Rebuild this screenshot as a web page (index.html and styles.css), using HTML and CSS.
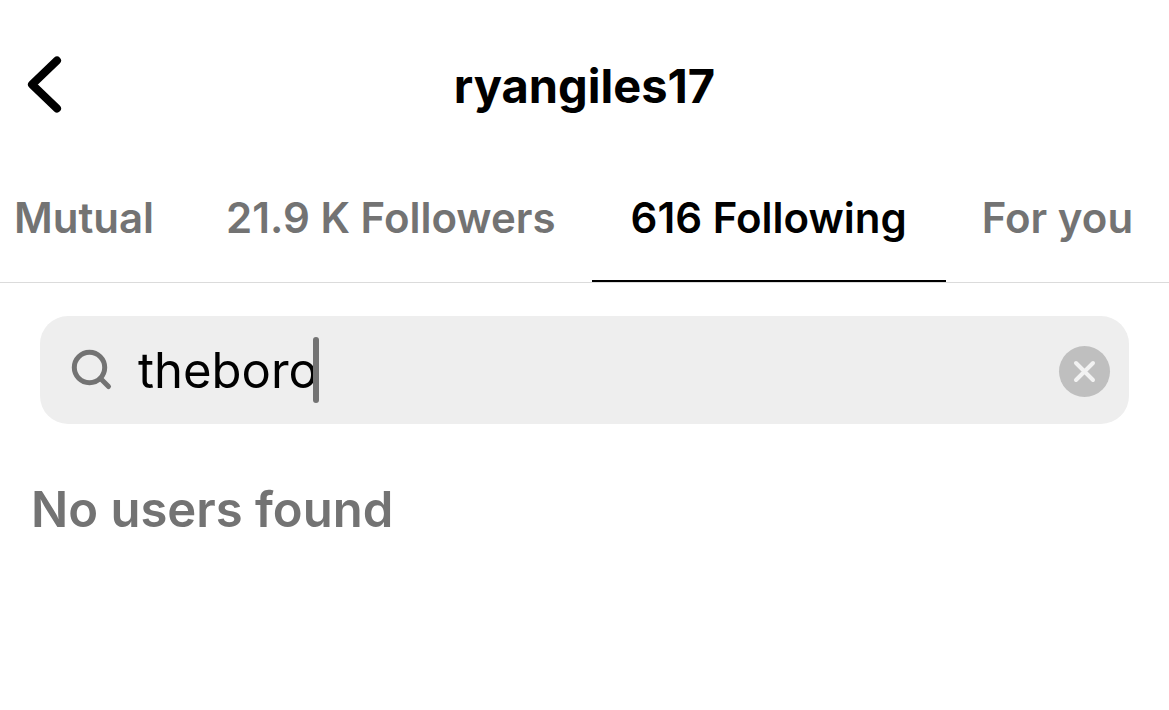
FILE: index.html
```html
<!DOCTYPE html>
<html lang="en">
<head>
<meta charset="utf-8">
<meta name="viewport" content="width=device-width, initial-scale=1">
<title>ryangiles17</title>
<link rel="stylesheet" href="styles.css">
</head>
<body>
<header class="header">
  <button class="back" type="button" aria-label="Back">
    <svg class="back-icon" viewBox="0 0 40 60" aria-hidden="true"><path d="M33 6.500L8 30.500L33 54.500"/></svg>
  </button>
  <h1 class="username">ryangiles17</h1>
</header>
<nav class="tabs" aria-label="Connections">
  <a class="tab" href="#mutual">Mutual</a>
  <a class="tab" href="#followers">21.9 K Followers</a>
  <a class="tab tab-active" href="#following" aria-current="page">616 Following</a>
  <a class="tab" href="#for-you">For you</a>
</nav>
<main class="content">
  <form class="search" role="search">
    <svg class="search-icon" viewBox="0 0 44 44" aria-hidden="true"><circle cx="18.500" cy="18.500" r="15.200"/><path d="M29.500 29.500L37.500 37.500"/></svg>
    <div class="field">
      <input class="query" type="text" value="theboro" aria-label="Search">
      <span class="caret"></span>
    </div>
    <button class="clear" type="button" aria-label="Clear search">
      <svg class="clear-icon" viewBox="0 0 51 51" aria-hidden="true"><path d="M17 17L34 34M34 17L17 34"/></svg>
    </button>
  </form>
  <p class="empty">No users found</p>
</main>
</body>
</html>
```
FILE: styles.css
```css
* {
  box-sizing: border-box;
}

body {
  margin: 0;
  background: #fff;
  color: #000;
  font-family: Inter, "Liberation Sans", sans-serif;
}

.header {
  display: grid;
  grid-template-columns: 80px 1fr 80px;
  align-items: end;
  padding-top: 50px;
}

.back {
  display: flex;
  padding: 4px 24px 8px;
  border: 0;
  background: none;
}

.back-icon {
  flex: none;
  width: 40px;
  height: 60px;
  fill: none;
  stroke: #000;
  stroke-width: 8px;
  stroke-linecap: round;
  stroke-linejoin: round;
}

.username {
  margin: 0;
  font-size: 47px;
  line-height: 72px;
  font-weight: 700;
  text-align: center;
}

.tabs {
  display: flex;
  margin-top: 32px;
  border-bottom: 1px solid #dbdbdb;
  white-space: nowrap;
}

.tab {
  padding: 38px 36px 36px;
  border-bottom: 2px solid transparent;
  color: #737373;
  font-size: 42px;
  line-height: 52px;
  font-weight: 600;
  text-decoration: none;
}

.tab:first-child {
  padding-left: 14px;
}

.tab-active {
  padding-right: 39px;
  padding-left: 39px;
  border-color: #000;
  color: #000;
}

.content {
  padding: 33px 40px;
}

.search {
  display: flex;
  align-items: center;
  height: 108px;
  padding: 2px 19px 0 31px;
  border-radius: 28px;
  background: #eee;
}

.search-icon {
  flex: none;
  width: 44px;
  height: 44px;
  margin-right: 23px;
  fill: none;
  stroke: #737373;
  stroke-width: 5px;
  stroke-linecap: round;
}

.field {
  position: relative;
  flex: 1;
}

.query {
  display: block;
  width: 100%;
  padding: 0;
  border: 0;
  outline: 0;
  background: none;
  color: #000;
  font: 400 49px/66px Inter, "Liberation Sans", sans-serif;
}

.caret {
  position: absolute;
  top: -1px;
  left: 175px;
  width: 6px;
  height: 66px;
  border-radius: 3px;
  background: #737373;
}

.clear {
  flex: none;
  width: 51px;
  height: 51px;
  padding: 0;
  border: 0;
  border-radius: 50%;
  background: #bfbfbf;
}

.clear-icon {
  display: block;
  width: 51px;
  height: 51px;
  fill: none;
  stroke: #f2f2f2;
  stroke-width: 4px;
  stroke-linecap: round;
}

.empty {
  margin: 52px -9px 0;
  color: #737373;
  font-size: 49px;
  line-height: 68px;
  font-weight: 600;
}
```
